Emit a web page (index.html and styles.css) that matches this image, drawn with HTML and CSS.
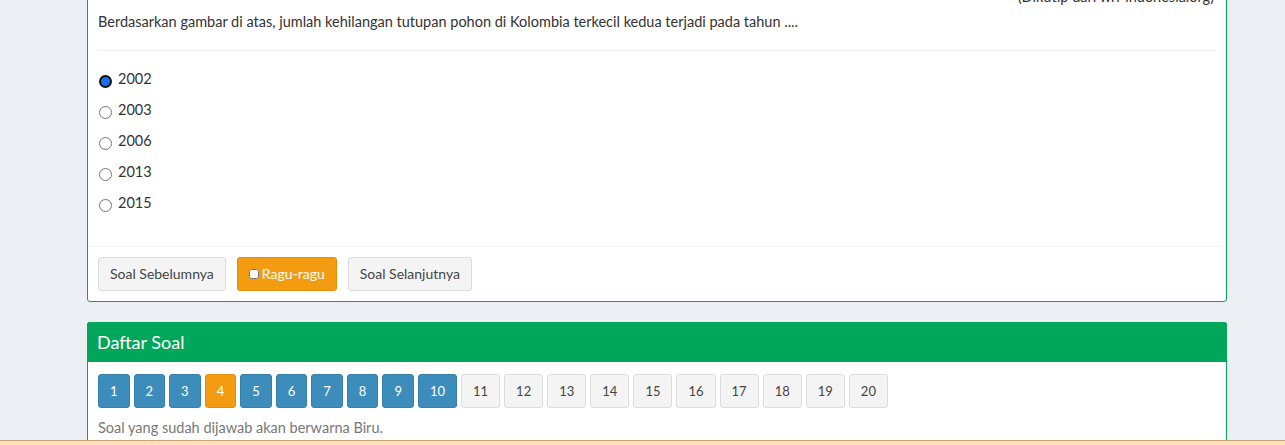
FILE: index.html
```html
<!DOCTYPE html>
<html lang="id">
<head>
<meta charset="utf-8">
<title>Ujian</title>
<link rel="stylesheet" href="styles.css">
</head>
<body>
<div class="content">
  <div class="box box-question">
    <div class="box-body">
      <p class="source">(Dikutip dari wri-indonesia.org)</p>
      <p class="question">Berdasarkan gambar di atas, jumlah kehilangan tutupan pohon di Kolombia terkecil kedua terjadi pada tahun ....</p>
      <hr class="divider">
      <div class="options">
        <label class="option"><input type="radio" name="jawab" checked><span>2002</span></label>
        <label class="option"><input type="radio" name="jawab"><span>2003</span></label>
        <label class="option"><input type="radio" name="jawab"><span>2006</span></label>
        <label class="option"><input type="radio" name="jawab"><span>2013</span></label>
        <label class="option"><input type="radio" name="jawab"><span>2015</span></label>
      </div>
    </div>
    <div class="box-footer">
      <button class="btn btn-default">Soal Sebelumnya</button>
      <button class="btn btn-warning"><input type="checkbox" class="ragu-check">Ragu-ragu</button>
      <button class="btn btn-default">Soal Selanjutnya</button>
    </div>
  </div>

  <div class="box box-list">
    <div class="box-header">Daftar Soal</div>
    <div class="box-body list-body">
      <div class="numbers">
        <button class="num num-answered">1</button>
        <button class="num num-answered">2</button>
        <button class="num num-answered">3</button>
        <button class="num num-doubt">4</button>
        <button class="num num-answered">5</button>
        <button class="num num-answered">6</button>
        <button class="num num-answered">7</button>
        <button class="num num-answered">8</button>
        <button class="num num-answered">9</button>
        <button class="num num-answered">10</button>
        <button class="num">11</button>
        <button class="num">12</button>
        <button class="num">13</button>
        <button class="num">14</button>
        <button class="num">15</button>
        <button class="num">16</button>
        <button class="num">17</button>
        <button class="num">18</button>
        <button class="num">19</button>
        <button class="num">20</button>
      </div>
      <p class="note">Soal yang sudah dijawab akan berwarna Biru.</p>
    </div>
  </div>
</div>
<div class="bottom-bar"></div>
</body>
</html>
```

FILE: styles.css
```css
* { box-sizing: border-box; }
html, body { margin: 0; padding: 0; }
body {
  background: #ecf0f5;
  font-family: Lato, "Open Sans", sans-serif;
  font-size: 14.5px;
  line-height: 20px;
  color: #333;
  overflow: hidden;
  height: 445px;
}
.content {
  width: 1140px;
  margin-left: 87px;
  margin-top: -22px;
}
.box {
  background: #fff;
  border: 1px solid #00a65a;
  border-radius: 3px;
}
.box-body { padding: 10px; }
.source {
  margin: -2px 0 0;
  text-align: right;
  padding-right: 2px;
  color: #3a3030;
}
.question {
  margin: 5px 0 0;
}
.divider {
  border: 0;
  border-top: 1px solid #eee;
  margin: 18px 0 0;
  height: 0;
}
.options {
  display: flex;
  flex-direction: column;
  gap: 11px;
  padding-top: 18px;
  padding-bottom: 23px;
}
.option {
  display: flex;
  align-items: flex-start;
  line-height: 20px;
}
.option input {
  appearance: none;
  -webkit-appearance: none;
  width: 13px;
  height: 13px;
  margin: 6px 6px 0 1px;
  border: 1px solid #767676;
  border-radius: 50%;
  background: #fff;
  flex: none;
}
.option input:checked {
  border: 2px solid #111;
  background: #1a6ff0;
}
.box-footer {
  border-top: 1px solid #f4f4f4;
  padding: 10px;
  display: flex;
  gap: 11px;
}
.btn {
  font-family: inherit;
  font-size: 14px;
  line-height: 20px;
  padding: 6px 11px;
  border-radius: 3px;
  border: 1px solid #ddd;
  background: #f4f4f4;
  color: #444;
  display: inline-flex;
  align-items: center;
}
.btn-warning {
  background: #f39c12;
  border-color: #e08e0b;
  color: #fff;
}
.ragu-check {
  width: 10px;
  height: 10px;
  margin: 0 3px 0 0;
}
.box-list { margin-top: 20px; }
.box-header {
  background: #00a65a;
  color: #fff;
  font-size: 18px;
  line-height: 20px;
  padding: 10px 10px;
  margin: -1px -1px 0;
  border-radius: 3px 3px 0 0;
}
.list-body { padding-top: 12px; }
.numbers {
  display: flex;
  flex-wrap: wrap;
  gap: 4px;
}
.num {
  font-family: inherit;
  font-size: 13px;
  line-height: 20px;
  padding: 6px 11px;
  border-radius: 3px;
  border: 1px solid #ddd;
  background: #f4f4f4;
  color: #444;
  text-align: center;
}
.num-answered {
  background: #3c8dbc;
  border-color: #367fa9;
  color: #fff;
}
.num-doubt {
  background: #f39c12;
  border-color: #e08e0b;
  color: #fff;
}
.note {
  margin: 10px 0 0;
  color: #777;
}
.bottom-bar {
  position: fixed;
  left: 0;
  right: 0;
  bottom: 0;
  height: 5px;
  background: #fde1ba;
  border-top: 1px solid #c6a279;
}
```
